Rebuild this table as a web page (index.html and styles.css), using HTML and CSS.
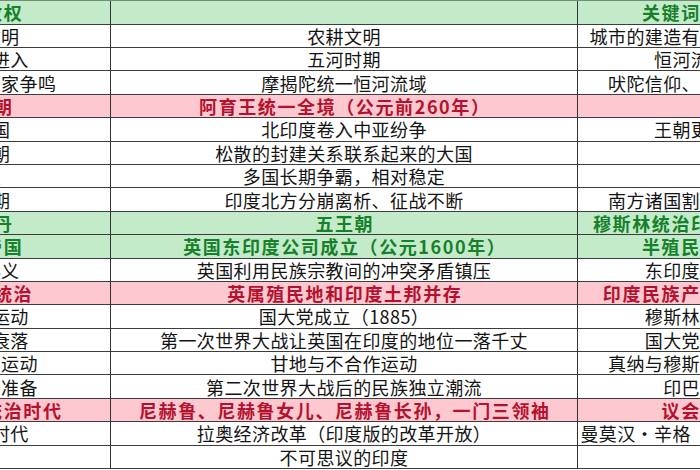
FILE: index.html
```html
<!DOCTYPE html>
<html lang="zh-CN">
<head>
<meta charset="utf-8">
<title>印度历史</title>
<link rel="stylesheet" href="styles.css">
</head>
<body>
<div class="viewport">
  <div class="sheet">
    <div class="row green"><div class="c">时代与政权</div><div class="c"></div><div class="c">关键词与人物</div></div>
    <div class="row"><div class="c">印度河文明</div><div class="c">农耕文明</div><div class="c">城市的建造有排水系统设计</div></div>
    <div class="row"><div class="c">雅利安人进入</div><div class="c">五河时期</div><div class="c">恒河流域圈</div></div>
    <div class="row"><div class="c">列国时代、百家争鸣</div><div class="c">摩揭陀统一恒河流域</div><div class="c">吠陀信仰、佛教的诞生</div></div>
    <div class="row red"><div class="c">孔雀王朝</div><div class="c">阿育王统一全境（公元前260年）</div><div class="c"></div></div>
    <div class="row"><div class="c">贵霜帝国</div><div class="c">北印度卷入中亚纷争</div><div class="c">王朝更迭快</div></div>
    <div class="row"><div class="c">笈多王朝</div><div class="c">松散的封建关系联系起来的大国</div><div class="c"></div></div>
    <div class="row"><div class="c">戒日王</div><div class="c">多国长期争霸，相对稳定</div><div class="c"></div></div>
    <div class="row"><div class="c">分裂时期</div><div class="c">印度北方分崩离析、征战不断</div><div class="c">南方诸国割据相互混战</div></div>
    <div class="row green"><div class="c">德里苏丹</div><div class="c">五王朝</div><div class="c">穆斯林统治印度六百余年</div></div>
    <div class="row green"><div class="c">莫卧儿帝国</div><div class="c">英国东印度公司成立（公元1600年）</div><div class="c">半殖民地社会</div></div>
    <div class="row"><div class="c">民族大起义</div><div class="c">英国利用民族宗教间的冲突矛盾镇压</div><div class="c">东印度殖民地</div></div>
    <div class="row red"><div class="c">英国殖民统治</div><div class="c">英属殖民地和印度土邦并存</div><div class="c">印度民族产业资本兴起</div></div>
    <div class="row"><div class="c">民族解放运动</div><div class="c">国大党成立（1885）</div><div class="c">穆斯林的觉醒</div></div>
    <div class="row"><div class="c">大英帝国衰落</div><div class="c">第一次世界大战让英国在印度的地位一落千丈</div><div class="c">国大党的壮大</div></div>
    <div class="row"><div class="c">甘地非暴力运动</div><div class="c">甘地与不合作运动</div><div class="c">真纳与穆斯林联盟崛起</div></div>
    <div class="row"><div class="c">印度独立的准备</div><div class="c">第二次世界大战后的民族独立潮流</div><div class="c">印巴分治</div></div>
    <div class="row red"><div class="c">尼赫鲁家族统治时代</div><div class="c">尼赫鲁、尼赫鲁女儿、尼赫鲁长孙，一门三领袖</div><div class="c">议会民主</div></div>
    <div class="row"><div class="c">经济改革时代</div><div class="c">拉奥经济改革（印度版的改革开放）</div><div class="c">曼莫汉・辛格　与新经济政策</div></div>
    <div class="row"><div class="c"></div><div class="c">不可思议的印度</div><div class="c"></div></div>
  </div>
</div>
</body>
</html>
```

FILE: styles.css
```css
html, body {
  margin: 0;
  padding: 0;
  background: #ffffff;
}

.viewport {
  width: 700px;
  height: 470px;
  overflow: hidden;
  background: #ffffff;
}

.sheet {
  display: grid;
  grid-template-columns: 274px 467px 245px;
  grid-template-rows: 23.6px repeat(19, 23.4px);
  width: 986px;
  margin-left: -163px;
  border-top: 1px solid #6f8f72;
  font-family: "Noto Sans CJK SC", "Noto Sans", sans-serif;
  font-size: 18px;
  letter-spacing: 0.4px;
  color: #141414;
}

.row {
  display: contents;
}

.c {
  box-sizing: border-box;
  display: flex;
  align-items: center;
  justify-content: center;
  white-space: nowrap;
  overflow: hidden;
  line-height: 20px;
  border-right: 1px solid #333333;
  border-bottom: 1px solid #3d3d3d;
  background: #ffffff;
}

.green .c {
  background: #c4ebc9;
  color: #16802a;
  font-weight: 700;
  letter-spacing: 1.6px;
  padding-left: 1.6px;
}

.red .c {
  background: #fdc8cf;
  color: #b3122f;
  font-weight: 700;
  letter-spacing: 1.6px;
  padding-left: 1.6px;
}
```
